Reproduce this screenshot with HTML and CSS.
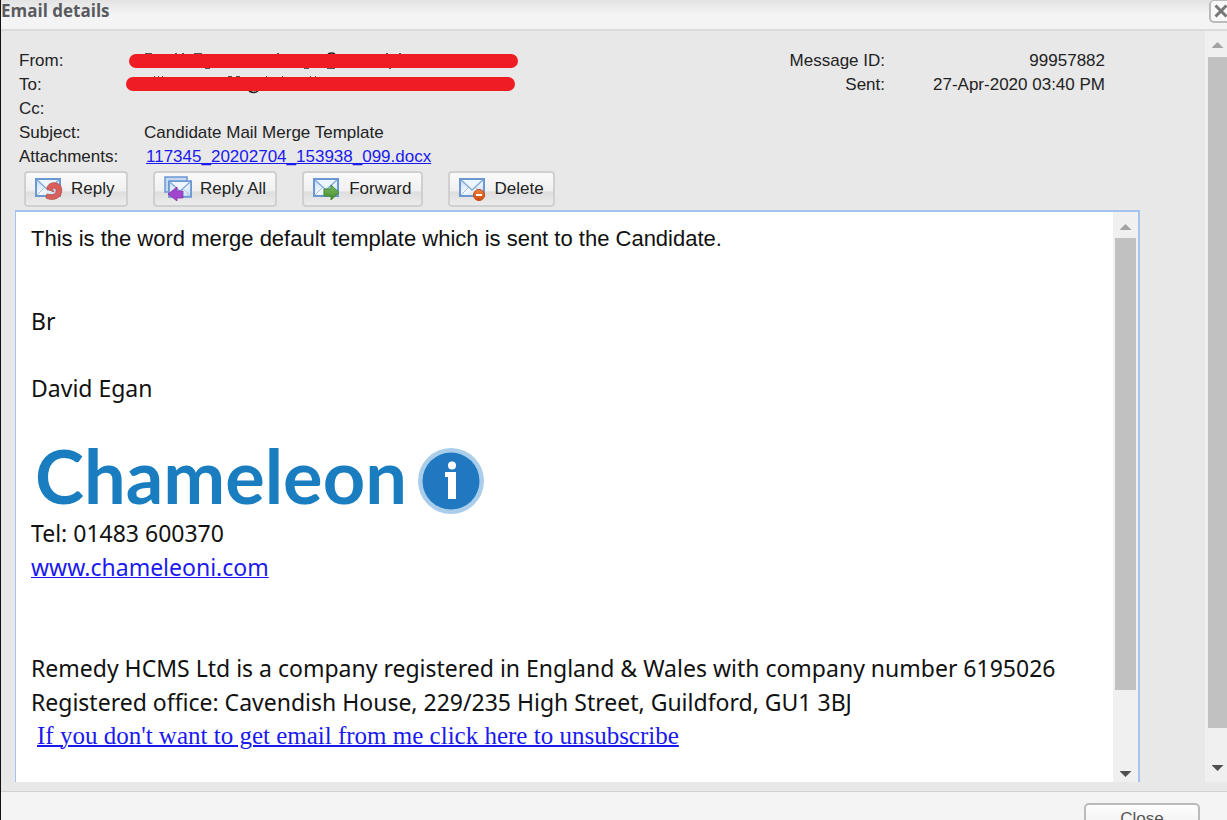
FILE: index.html
```html
<!DOCTYPE html>
<html lang="en">
<head>
<meta charset="utf-8">
<title>Email details</title>
<link rel="stylesheet" href="styles.css">
</head>
<body>
<svg class="defs" aria-hidden="true">
  <defs>
    <linearGradient id="paper" x1="0" y1="0" x2="1" y2="1">
      <stop offset="0" stop-color="#c3dbf5"/><stop offset=".5" stop-color="#f4f9ff"/><stop offset="1" stop-color="#bcd5f2"/>
    </linearGradient>
    <linearGradient id="leaf" x1="0" y1="0" x2="0" y2="1">
      <stop offset="0" stop-color="#83bd68"/><stop offset="1" stop-color="#3f8a2c"/>
    </linearGradient>
    <linearGradient id="ember" x1="0" y1="0" x2="0" y2="1">
      <stop offset="0" stop-color="#f0843c"/><stop offset="1" stop-color="#cf4a0c"/>
    </linearGradient>
    <symbol id="envelope" viewBox="0 0 26 19">
      <rect x="1" y="1" width="24" height="17" fill="url(#paper)" stroke="#6b98d0" stroke-width="2"/>
      <path d="M2 17 10 9M24 17 16 9" stroke="#a3c0e3" stroke-width="1" fill="none"/>
      <path d="M2 2 13 12 24 2" stroke="#86abdb" stroke-width="1.5" fill="#edf5fd"/>
    </symbol>
  </defs>
</svg>
<div class="dialog" role="dialog" aria-labelledby="title">
  <header class="titlebar">
    <h1 id="title">Email details</h1>
    <button class="dismiss" type="button" aria-label="Close dialog">
      <svg width="14" height="14" viewBox="0 0 14 14"><path d="M1.500 1.500 12.500 12.500M12.500 1.500 1.500 12.500" stroke="#777" stroke-width="3"/></svg>
    </button>
  </header>
  <div class="viewport">
    <main class="content">
      <div class="meta">
        <dl class="fields">
          <dt>From:</dt>
          <dd><svg class="redaction" width="394" height="20" viewBox="0 0 394 20" role="img" aria-label="Redacted sender">
            <path d="M21 3h7M51 3h2M58 3h2M70 3h8M153 3h2M204 3q4-2 7 0M262 3h2M275 3h2M81 17h5M180 17h5M203 17h8M265 17h2" stroke="#222" stroke-width="1.500" fill="none"/>
            <path d="M12 10H387" stroke="#ef1c24" stroke-width="14" stroke-linecap="round"/></svg></dd>
          <dt>To:</dt>
          <dd><svg class="redaction" width="394" height="20" viewBox="0 0 394 20" role="img" aria-label="Redacted recipient">
            <path d="M30 2h1M34 2h1M38 2h1M104 2h4M112 2h4M142 2h1M158 2h1M186 2h1M191 2h1M125 16q5 3 9 0" stroke="#222" stroke-width="1.500" fill="none"/>
            <path d="M9 9H384" stroke="#ef1c24" stroke-width="14" stroke-linecap="round"/></svg></dd>
          <dt>Cc:</dt><dd></dd>
          <dt>Subject:</dt><dd>Candidate Mail Merge Template</dd>
          <dt>Attachments:</dt><dd><a href="#attachment">117345_20202704_153938_099.docx</a></dd>
        </dl>
        <dl class="fields sent">
          <dt>Message ID:</dt><dd>99957882</dd>
          <dt>Sent:</dt><dd>27-Apr-2020 03:40 PM</dd>
        </dl>
      </div>
      <div class="toolbar">
        <button type="button">
          <svg width="28" height="24" viewBox="0 0 28 24"><use href="#envelope" y="1" width="26" height="19"/>
            <path d="M12 12C12 7 17 5 21 6C26 7 28 12 26 17C24 22 17 24 11 21L12 17C16 18 20 18 21 15C22 12 19 10 17 12L19 15Z" fill="#d8605c" stroke="#b94946" stroke-width=".8"/></svg>
          Reply</button>
        <button type="button">
          <svg width="28" height="26" viewBox="0 0 28 26"><rect x="1" y="1" width="22" height="15" fill="#c5daf2" stroke="#6b98d0" stroke-width="1.500"/><use href="#envelope" x="4" y="4" width="24" height="18"/>
            <path d="M4 18 13 11V15H19V22H13V25Z" fill="#a045cc" stroke="#8737b1" stroke-width=".8"/></svg>
          Reply All</button>
        <button type="button">
          <svg width="28" height="24" viewBox="0 0 28 24"><use href="#envelope" y="1" width="26" height="19"/>
            <path d="M11 12H18V8L26 15.500 18 23V19H11Z" fill="url(#leaf)" stroke="#3f8a2c"/></svg>
          Forward</button>
        <button type="button">
          <svg width="28" height="24" viewBox="0 0 28 24"><use href="#envelope" y="1" width="26" height="19"/>
            <circle cx="20" cy="18" r="5.500" fill="url(#ember)" stroke="#c44c12"/><path d="M17 18H23" stroke="#fff" stroke-width="2"/></svg>
          Delete</button>
      </div>
      <div class="message">
        <article class="letter">
          <p class="intro">This is the word merge default template which is sent to the Candidate.</p>
          <p class="signoff">Br</p>
          <p class="sender">David Egan</p>
          <div class="logo"><span>Chameleon</span>
            <svg width="68" height="68" viewBox="0 0 68 68" role="img" aria-label="i"><circle cx="34" cy="34" r="33" fill="#a9cdea"/><circle cx="34" cy="34" r="28.500" fill="#2079c0"/><circle cx="35" cy="18.500" r="4" fill="#fff"/><path d="M28 25H39V52H31V30H28Z" fill="#fff"/></svg>
          </div>
          <p>Tel: 01483 600370</p>
          <p><a href="#site">www.chameleoni.com</a></p>
          <p class="legal">Remedy HCMS Ltd is a company registered in England &amp; Wales with company number 6195026<br>Registered office: Cavendish House, 229/235 High Street, Guildford, GU1 3BJ</p>
          <p class="unsubscribe"><a href="#unsubscribe">If you don't want to get email from me click here to unsubscribe</a></p>
        </article>
        <div class="scrollbar inner" aria-hidden="true"><i class="up"></i><div class="track"><div class="thumb"></div></div><i class="down"></i></div>
      </div>
    </main>
    <div class="scrollbar outer" aria-hidden="true"><i class="up"></i><div class="track"><div class="thumb"></div></div><i class="down"></i></div>
  </div>
  <footer class="footer"><button type="button">Close</button></footer>
</div>
</body>
</html>
```
FILE: styles.css
```css
* { box-sizing: border-box; }
body { margin: 0; font-family: "Liberation Sans", Arial, sans-serif; font-size: 17px; color: #222; }
h1, p, dl, dd { margin: 0; }
a { color: #1a1aee; text-decoration-thickness: 1px; }
button { font: inherit; color: #222; }
.defs { position: absolute; width: 0; height: 0; }

.dialog { display: flex; flex-direction: column; height: 100vh; overflow: hidden; border-left: 1px solid #111; background: #e8e8e8; }
.titlebar { display: flex; justify-content: space-between; flex: none; height: 31px; border-bottom: 2px solid #dadcdb; background: linear-gradient(#e3e3e3, #f4f4f4 50%); overflow: hidden; }
.titlebar h1 { font: bold 17px/22px "Open Sans", "Noto Sans", sans-serif; color: #5a5b5e; }
.dismiss { display: grid; place-items: center start; flex: none; width: 18px; height: 23px; padding: 0 0 0 3px; border: 2px solid #bbb; border-width: 1px 0 2px 2px; border-radius: 5px 0 0 5px; background: #f8f8f8; overflow: hidden; }

.viewport { display: flex; flex: 1; min-height: 0; padding-bottom: 9px; }
.content { display: flex; flex-direction: column; flex: 1; min-width: 0; padding: 18px 65px 0 14px; }

.meta { display: flex; justify-content: space-between; padding: 0 35px 0 4px; }
.fields { display: grid; grid-template-columns: 125px auto; grid-auto-rows: 24px; line-height: 24px; }
.fields.sent { grid-template-columns: auto auto; column-gap: 48px; text-align: right; }
.fields a { margin-left: 2px; }
.redaction { display: block; margin: 2px 0 0 -20px; }

.toolbar { display: flex; gap: 25px; padding: 2px 0 3px 9px; }
.toolbar button { display: flex; align-items: center; gap: 8px; min-width: 104px; height: 36px; padding: 0 9px; border: 2px solid #cfd0d2; border-radius: 4px; background: linear-gradient(#fafafa, #f0f0f0 55%, #dedede 60%, #ececec); white-space: nowrap; }

.message { display: flex; flex: 1; min-height: 0; border: 1px solid #a3c4f0; border-width: 2px 2px 0 1px; background: #fff; overflow: hidden; }
.letter { flex: 1; min-width: 0; padding: 10px 15px; font: 23px/34px "Noto Sans", sans-serif; color: #111; }
.intro { font-family: "Liberation Sans", Arial, sans-serif; font-size: 22px; }
.signoff { margin-top: 48px; }
.sender { margin-top: 33px; }
.logo { display: flex; align-items: center; gap: 10px; height: 68px; margin: 42px 0 1px 4px; color: #1a7dc0; font: bold 74px/54px Lato, sans-serif; }
.logo span { padding-bottom: 10px; }
.legal { margin-top: 67px; }
.unsubscribe { padding-left: 6px; font: 25px/34px "Liberation Serif", "Times New Roman", serif; }
.unsubscribe a { text-decoration-thickness: 2px; }

.scrollbar { display: flex; flex-direction: column; align-items: center; flex: none; background: #f0f0f0; }
.scrollbar i { flex: none; width: 12px; height: 6px; background: #a3a3a3; clip-path: polygon(50% 0, 100% 100%, 0 100%); }
.scrollbar .down { background: #505050; clip-path: polygon(0 0, 100% 0, 50% 100%); }
.track { flex: 1; min-height: 0; align-self: stretch; }
.thumb { background: #c1c1c1; }
.inner { width: 25px; padding: 12px 0 5px; }
.inner .track { margin: 8px 2px; }
.inner .thumb { height: 86%; }
.outer { width: 22px; padding: 11px 0 11px 3px; }
.outer .track { margin: 9px 0; }
.outer .thumb { height: 96%; }

.footer { display: flex; justify-content: flex-end; flex: none; height: 29px; padding: 11px 27px 0 0; border-top: 1px solid #d0d1d3; background: #f4f4f4; overflow: hidden; }
.footer button { width: 116px; height: 32px; border: 2px solid #babbbc; border-radius: 5px; background: linear-gradient(#fdfdfd, #eee); color: #555; }
```
